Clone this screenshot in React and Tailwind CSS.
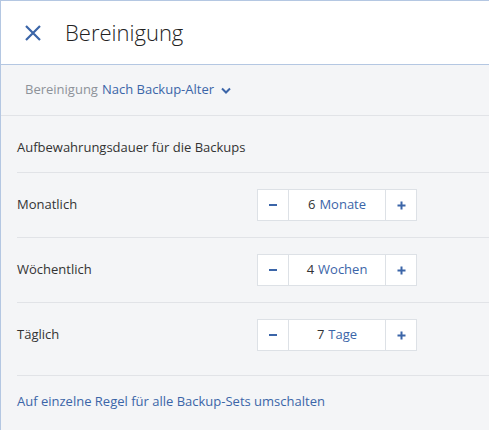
import React, { useState } from 'react';

// Cleanup settings panel: retention per backup age
const Stepper = ({ value, unit, onDec, onInc }) => (
  <div className="flex h-[32px] w-[160px] border border-[#dde1e6] bg-white">
    <button onClick={onDec} className="flex w-[31px] items-center justify-center border-r border-[#dde1e6]">
      <span className="block h-[2px] w-[8px] bg-[#3b65a8]" />
    </button>
    <div className="flex flex-1 items-center justify-center text-[13px]">
      <span className="text-[#333]">{value}</span>
      <span className="ml-[4px] text-[#3b65a8]">{unit}</span>
    </div>
    <button onClick={onInc} className="flex w-[31px] items-center justify-center border-l border-[#dde1e6]">
      <svg width="9" height="9" viewBox="0 0 9 9">
        <path d="M4.5 0.5v8M0.5 4.5h8" stroke="#3b65a8" strokeWidth="2" />
      </svg>
    </button>
  </div>
);

const App = () => {
  const [rows, setRows] = useState([
    { label: 'Monatlich', value: 6, unit: 'Monate' },
    { label: 'Wöchentlich', value: 4, unit: 'Wochen' },
    { label: 'Täglich', value: 7, unit: 'Tage' },
  ]);

  const change = (i, d) =>
    setRows(rows.map((r, j) => (j === i ? { ...r, value: Math.max(1, r.value + d) } : r)));

  return (
    <div
      className="flex h-[430px] w-[489px] flex-col border-l border-t border-[#b4c7e2] bg-[#f4f5f7]"
      style={{ fontFamily: '"Open Sans", sans-serif' }}
    >
      {/* Header */}
      <div className="flex h-[64px] shrink-0 items-center border-b border-[#b4c7e2] bg-white">
        <svg className="ml-[23px]" width="18" height="18" viewBox="0 0 18 18">
          <path d="M2 2l14 14M16 2L2 16" stroke="#3b65a8" strokeWidth="2.2" />
        </svg>
        <span className="ml-[23px] text-[22px] font-light text-[#222]">Bereinigung</span>
      </div>

      {/* Mode selector */}
      <div className="flex h-[51px] shrink-0 items-center border-b border-[#e1e3e7] pl-[24px] text-[13px]">
        <span className="text-[#8d9299]">Bereinigung</span>
        <span className="ml-[4px] text-[#3b65a8]">Nach Backup-Alter</span>
        <svg className="ml-[7px]" width="10" height="7" viewBox="0 0 10 7">
          <path d="M1 1.5l4 4 4-4" stroke="#3b65a8" strokeWidth="2" fill="none" />
        </svg>
      </div>

      <div className="pl-[16px]">
        <div className="flex h-[57px] items-start border-b border-[#e1e3e7] pt-[22px] text-[13px] text-[#333]">
          Aufbewahrungsdauer für die Backups
        </div>
        {rows.map((r, i) => (
          <div
            key={r.label}
            className={`flex items-center border-b border-[#e1e3e7] pt-[16px] ${i === 2 ? 'pb-[24px]' : 'pb-[16px]'}`}
          >
            <span className="w-[240px] text-[13px] text-[#333]">{r.label}</span>
            <Stepper value={r.value} unit={r.unit} onDec={() => change(i, -1)} onInc={() => change(i, 1)} />
          </div>
        ))}
        <div className="flex h-[52px] items-center text-[13px] text-[#3b65a8]">
          <a href="#single">Auf einzelne Regel für alle Backup-Sets umschalten</a>
        </div>
      </div>
    </div>
  );
};

export default App;
